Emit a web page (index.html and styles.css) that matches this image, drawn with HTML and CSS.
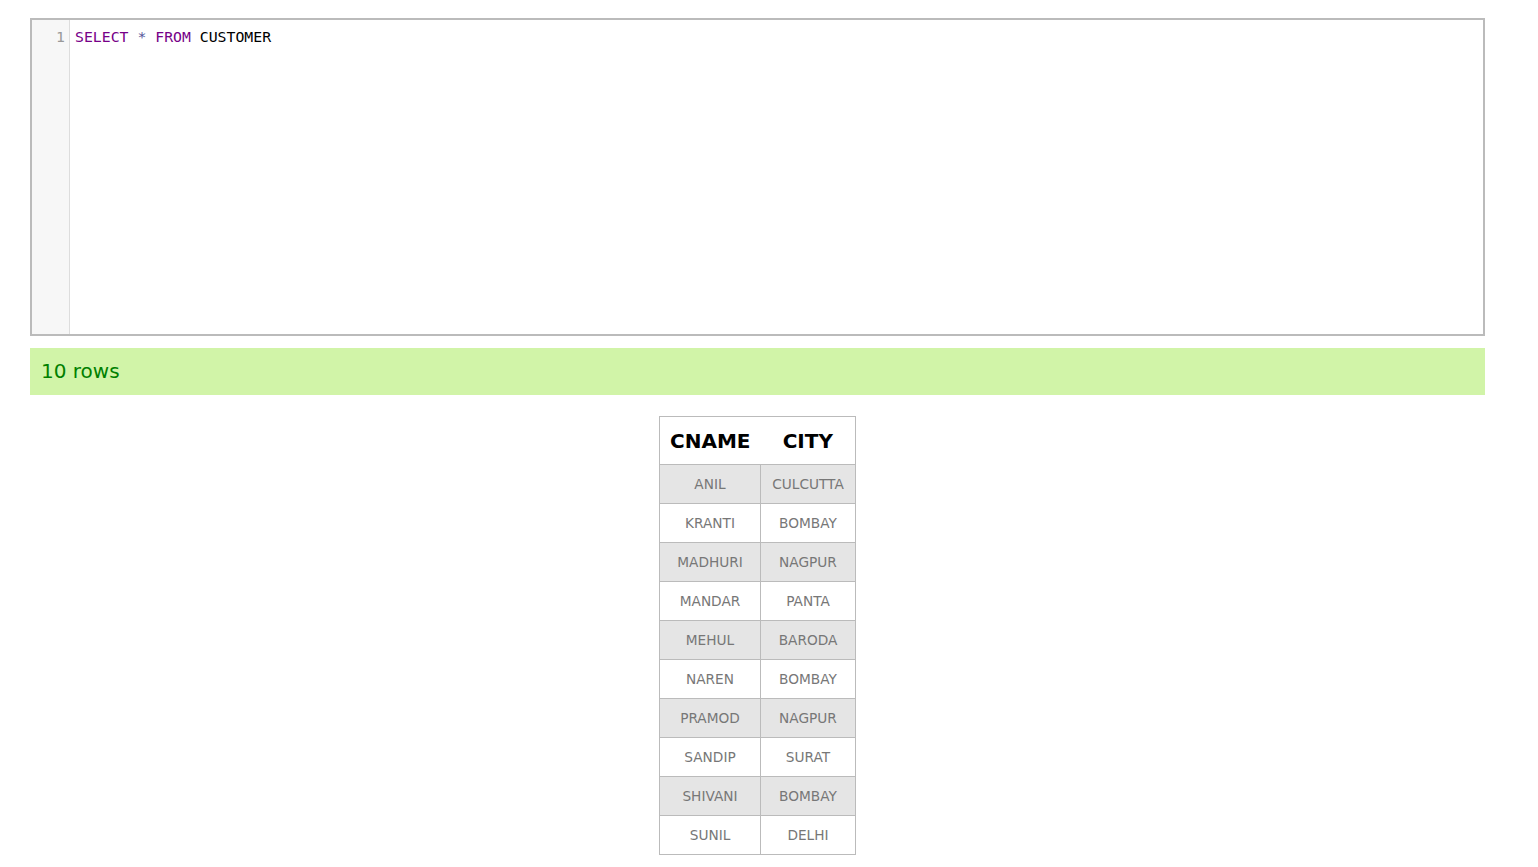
FILE: index.html
```html
<!DOCTYPE html>
<html>
<head>
<meta charset="utf-8">
<link rel="stylesheet" href="styles.css">
</head>
<body>
<div class="page">
  <div class="editor">
    <div class="gutter"><span class="ln">1</span></div>
    <div class="code"><span class="kw">SELECT</span> <span class="op">*</span> <span class="kw">FROM</span> <span class="id">CUSTOMER</span></div>
  </div>
  <div class="status">10 rows</div>
  <div class="result">
    <table class="grid">
      <thead>
        <tr><th>CNAME</th><th>CITY</th></tr>
      </thead>
      <tbody>
        <tr><td>ANIL</td><td>CULCUTTA</td></tr>
        <tr><td>KRANTI</td><td>BOMBAY</td></tr>
        <tr><td>MADHURI</td><td>NAGPUR</td></tr>
        <tr><td>MANDAR</td><td>PANTA</td></tr>
        <tr><td>MEHUL</td><td>BARODA</td></tr>
        <tr><td>NAREN</td><td>BOMBAY</td></tr>
        <tr><td>PRAMOD</td><td>NAGPUR</td></tr>
        <tr><td>SANDIP</td><td>SURAT</td></tr>
        <tr><td>SHIVANI</td><td>BOMBAY</td></tr>
        <tr><td>SUNIL</td><td>DELHI</td></tr>
      </tbody>
    </table>
  </div>
</div>
</body>
</html>
```

FILE: styles.css
```css
html, body {
  margin: 0;
  padding: 0;
  background: #fff;
}
.page {
  width: 1455px;
  margin-left: 30px;
  padding-top: 18px;
  font-family: "DejaVu Sans", Verdana, sans-serif;
}
.editor {
  display: flex;
  height: 314px;
  border: 2px solid #bbb;
  background: #fff;
}
.gutter {
  width: 38px;
  background: #f7f7f7;
  border-right: 1px solid #ddd;
  text-align: right;
  padding-top: 8px;
  box-sizing: border-box;
  padding-right: 4px;
  font-family: "DejaVu Sans Mono", monospace;
  font-size: 14.8px;
  line-height: 18px;
}
.ln {
  color: #999;
}
.code {
  padding-left: 5px;
  padding-top: 8px;
  font-family: "DejaVu Sans Mono", monospace;
  font-size: 14.8px;
  line-height: 18px;
  white-space: pre;
}
.kw { color: #770088; }
.op { color: #555599; }
.id { color: #000; }
.status {
  margin-top: 12px;
  height: 47px;
  background: #d1f4a8;
  color: #008000;
  font-size: 20px;
  line-height: 47px;
  padding-left: 11px;
}
.result {
  display: flex;
  justify-content: center;
  padding-top: 21px;
}
.grid {
  border-collapse: collapse;
  border: 1px solid #bbb;
}
.grid th {
  font-size: 20px;
  font-weight: bold;
  color: #000;
  height: 47px;
  padding: 0 10px;
  text-align: center;
  border-bottom: 1px solid #bbb;
}
.grid td {
  font-size: 13.7px;
  color: #777;
  height: 38px;
  padding: 0;
  text-align: center;
  border: 1px solid #bbb;
}
.grid td:first-child { width: 100px; }
.grid td:last-child { width: 94px; }
.grid tbody tr:nth-child(odd) td { background: #e5e5e5; }
```
